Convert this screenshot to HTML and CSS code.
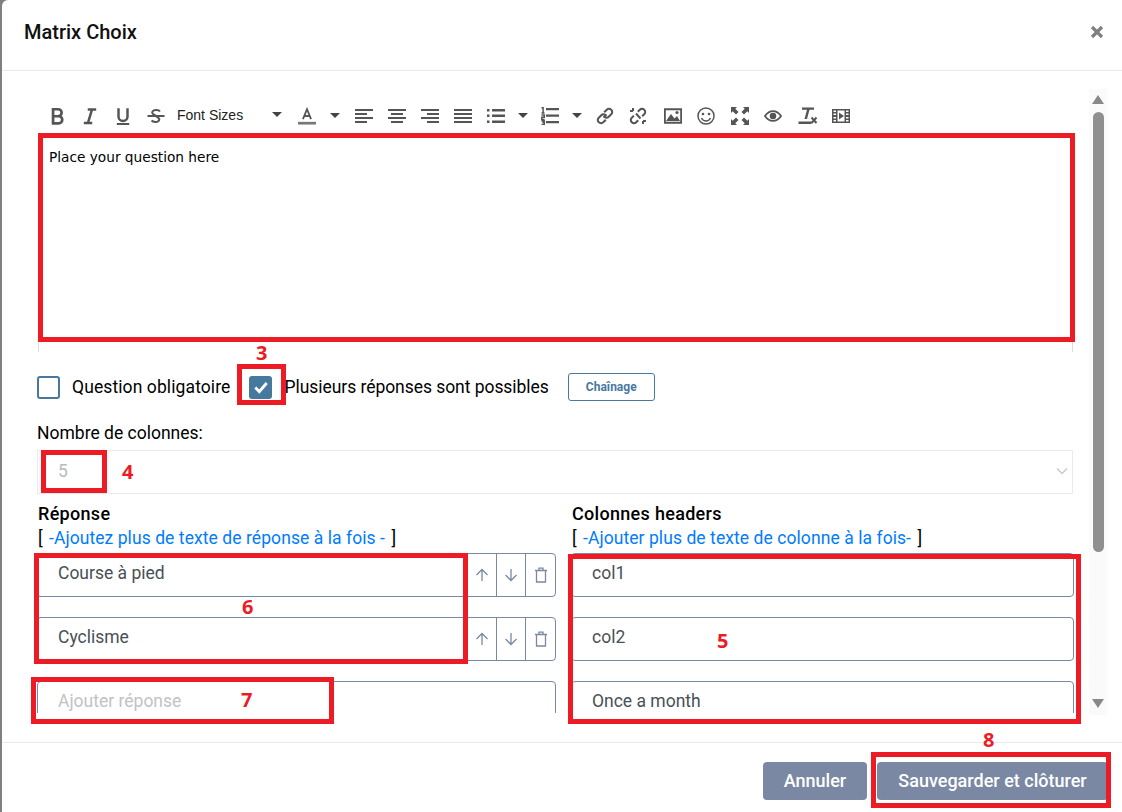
FILE: index.html
```html
<!DOCTYPE html>
<html lang="fr">
<head>
<meta charset="utf-8">
<title>Matrix Choix</title>
<link rel="stylesheet" href="styles.css">
</head>
<body>
<div class="modal">
  <header class="head">
    <h1 class="title">Matrix Choix</h1>
    <svg class="close" viewBox="0 0 14 14"><path d="M2 2l10 10M12 2L2 12"/></svg>
  </header>
  <div class="body">
    <div class="scroll">
      <div class="toolbar">
        <span class="tb"><svg viewBox="0 0 16 16"><path class="s bold" d="M4.500 2h4.500a3 3 0 0 1 0 6.200H4.500zM4.500 8.200h5a3 3 0 0 1 0 6.300h-5zM4.500 2v12.500"/></svg></span>
        <span class="tb"><svg viewBox="0 0 16 16"><path class="s semi" d="M6 2.200h7.500M2.500 14.200h7.500M9.800 2.200L6.200 14.200"/></svg></span>
        <span class="tb"><svg viewBox="0 0 16 16"><path class="s semi" d="M4 1v7.500a4 4 0 0 0 8 0V1"/><path class="s" d="M2.500 15.200h11"/></svg></span>
        <span class="tb"><svg viewBox="0 0 18 16"><path class="s" d="M13 3.500c-1-1.500-6-2.500-7.500 0S8 7 9 8s4.500 2 3 4.500-6 1.500-7.500 0M0.500 8h17" /></svg></span>
        <span class="fsize">Font Sizes<i class="caret"></i></span>
        <span class="tb w32"><svg viewBox="0 0 20 20"><path class="s" d="M5.500 13.500L10 2.500l4.500 11M7 10h6"/><path class="bar" d="M0 16.500h20v3H0z"/></svg></span>
        <span class="tb w24"><i class="caret"></i></span>
        <span class="tb"><svg viewBox="0 0 18 16"><path class="f" d="M0 1h18v2H0zM0 5h12v2H0zM0 9h18v2H0zM0 13h12v2H0z"/></svg></span>
        <span class="tb"><svg viewBox="0 0 18 16"><path class="f" d="M0 1h18v2H0zM3 5h12v2H3zM0 9h18v2H0zM3 13h12v2H3z"/></svg></span>
        <span class="tb"><svg viewBox="0 0 18 16"><path class="f" d="M0 1h18v2H0zM6 5h12v2H6zM0 9h18v2H0zM6 13h12v2H6z"/></svg></span>
        <span class="tb"><svg viewBox="0 0 18 16"><path class="f" d="M0 1h18v2H0zM0 5h18v2H0zM0 9h18v2H0zM0 13h18v2H0z"/></svg></span>
        <span class="tb w34"><svg viewBox="0 0 18 16"><path class="f" d="M0 1h2.500v2.500H0zM0 6.500h2.500V9H0zM0 12.500h2.500V15H0zM5 1h13v2.500H5zM5 6.500h13V9H5zM5 12.500h13V15H5z"/></svg></span>
        <span class="tb w20"><i class="caret"></i></span>
        <span class="tb w34"><svg viewBox="0 0 18 18"><path class="f" d="M5 1h13v2.200H5zM5 7.500h13v2.200H5zM5 14h13v2.200H5z"/><path class="thin" d="M0.500 0.800h1.600v5M0.500 6h3M0.500 8h2.800v2.200H0.800v2.300h2.800M0.500 14h2.800v1.600H1.500h1.800v1.900H0.500"/></svg></span>
        <span class="tb w20"><i class="caret"></i></span>
        <span class="tb gap1"><svg viewBox="0 0 18 18"><path class="s" d="M7.500 10.500l3-3M8.200 5.300l2.500-2.500a3 3 0 0 1 4.500 0a3 3 0 0 1 0 4.500l-2.500 2.500a3 3 0 0 1-4 .2M9.800 12.700l-2.500 2.500a3 3 0 0 1-4.500 0a3 3 0 0 1 0-4.500l2.500-2.500a3 3 0 0 1 4-.2"/></svg></span>
        <span class="tb"><svg viewBox="0 0 18 18"><path class="s" d="M8.800 4.700l2-2a3 3 0 0 1 4.400 0a3 3 0 0 1 0 4.500l-2 2M9.200 13.300l-2 2a3 3 0 0 1-4.400 0a3 3 0 0 1 0-4.500l2-2M4 1v3M1 4h3M14 17v-3M17 14h-3M7 6.500l4.500 5"/></svg></span>
        <span class="tb gap2"><svg viewBox="0 0 18 16"><path class="s" d="M0.800 1.200h16.400v13.600H0.800z"/><path class="f" d="M2 13l5-7 3.500 4.500L13 8l3 5z"/><circle class="f" cx="13" cy="4.500" r="1.600"/></svg></span>
        <span class="tb"><svg viewBox="0 0 18 18"><circle class="thin" cx="9" cy="9" r="8"/><circle class="f" cx="6" cy="7" r="1.300"/><circle class="f" cx="12" cy="7" r="1.300"/><path class="thin" d="M4.500 11c1 2 2.600 3 4.500 3s3.500-1 4.500-3"/></svg></span>
        <span class="tb gap1"><svg viewBox="0 0 18 18"><path class="f" d="M0 0h6L4.300 1.700 7.500 5 5 7.500 1.700 4.300 0 6zM18 0v6l-1.700-1.700L13 7.500 10.500 5l3.200-3.300L12 0zM0 18v-6l1.700 1.700L5 10.500 7.500 13l-3.200 3.300L6 18zM18 18h-6l1.700-1.700L10.500 13l2.500-2.500 3.300 3.200L18 12z"/></svg></span>
        <span class="tb"><svg viewBox="0 0 20 14"><path class="s" d="M1 7c2.500-3.500 5.500-5.500 9-5.500S16.500 3.500 19 7c-2.500 3.500-5.500 5.500-9 5.500S3.500 10.500 1 7z"/><circle class="f" cx="10" cy="7" r="3.600"/></svg></span>
        <span class="tb gap2"><svg class="wide" viewBox="0 0 20 18"><path class="f" d="M4 0.500h12v2.200h-4.500L9 12H6.500L9 2.700H4zM0.500 14.500h13v2.400H0.500z"/><path class="s" d="M13.500 10.500l5 5.500M18.500 10.500l-5 5.500"/></svg></span>
        <span class="tb"><svg viewBox="0 0 18 16"><path class="f" d="M0 1h18v14H0zM1.500 2.500V4H4V2.500zM14 2.500V4h2.500V2.500zM1.500 5.500V7H4V5.500zM14 5.500V7h2.500V5.500zM1.500 9v1.500H4V9zM14 9v1.500h2.500V9zM1.500 12v1.500H4V12zM14 12v1.500h2.500V12zM5.500 2.500v11h7v-11z" fill-rule="evenodd"/><path class="f" d="M7 4.500v7L12 8z"/></svg></span>
      </div>
      <div class="editor">
        <p class="placeholder">Place your question here</p>
      </div>
      <div class="checks">
        <label class="check first"><span class="box"></span><span class="lbl">Question obligatoire</span></label>
        <label class="check second"><span class="box on"><svg viewBox="0 0 14 14"><path d="M2 7.500l3.500 3.500L12 3.500"/></svg></span><span class="lbl">Plusieurs réponses sont possibles</span></label>
        <button class="chain">Chaînage</button>
      </div>
      <div class="label-nb">Nombre de colonnes:</div>
      <div class="select">
        <span>5</span>
        <svg viewBox="0 0 12 8"><path d="M1 1.500l5 5 5-5"/></svg>
      </div>
      <div class="columns">
        <section class="col">
          <div class="col-title">Réponse</div>
          <div class="col-link">[ <a>-Ajoutez plus de texte de réponse à la fois - </a>]</div>
          <div class="row">
            <div class="field">Course à pied</div>
            <span class="act"><svg viewBox="0 0 14 14"><path d="M7 13V1.500M1.500 7L7 1.500 12.500 7"/></svg></span>
            <span class="act"><svg viewBox="0 0 14 14"><path d="M7 1v11.500M1.500 7L7 12.500 12.500 7"/></svg></span>
            <span class="act"><svg viewBox="0 0 14 16"><path d="M1 3.500h12M5 3.500V1.200h4v2.300M2.500 3.500V15h9V3.500"/></svg></span>
          </div>
          <div class="row">
            <div class="field">Cyclisme</div>
            <span class="act"><svg viewBox="0 0 14 14"><path d="M7 13V1.500M1.500 7L7 1.500 12.500 7"/></svg></span>
            <span class="act"><svg viewBox="0 0 14 14"><path d="M7 1v11.500M1.500 7L7 12.500 12.500 7"/></svg></span>
            <span class="act"><svg viewBox="0 0 14 16"><path d="M1 3.500h12M5 3.500V1.200h4v2.300M2.500 3.500V15h9V3.500"/></svg></span>
          </div>
          <div class="row"><div class="field solo ph">Ajouter réponse</div></div>
        </section>
        <section class="col">
          <div class="col-title">Colonnes headers</div>
          <div class="col-link">[ <a>-Ajouter plus de texte de colonne à la fois- </a>]</div>
          <div class="row"><div class="field solo">col1</div></div>
          <div class="row"><div class="field solo">col2</div></div>
          <div class="row"><div class="field solo">Once a month</div></div>
        </section>
      </div>
    </div>
    <div class="sbar">
      <i class="arrow up"></i>
      <div class="thumb"></div>
      <i class="arrow down"></i>
    </div>
  </div>
  <footer class="foot">
    <button class="btn cancel">Annuler</button>
    <button class="btn save">Sauvegarder et clôturer</button>
  </footer>

  <div class="mark m1"></div>
  <div class="mark m3"></div>
  <div class="mark m4"></div>
  <div class="mark m5"></div>
  <div class="mark m6"></div>
  <div class="mark m7"></div>
  <div class="mark m8"></div>
  <span class="num n3">3</span>
  <span class="num n4">4</span>
  <span class="num n5">5</span>
  <span class="num n6">6</span>
  <span class="num n7">7</span>
  <span class="num n8">8</span>
</div>
</body>
</html>
```
FILE: styles.css
```css
* { box-sizing: border-box; }
html, body { margin: 0; height: 100%; }
body {
  background: #7f7f7f;
  font-family: Roboto, "Noto Sans", sans-serif;
  color: #000;
  overflow: hidden;
}
.modal {
  position: relative;
  width: 1120px;
  height: 812px;
  margin-left: 2px;
  background: #fff;
  border-top-left-radius: 6px;
  display: flex;
  flex-direction: column;
}
.head {
  height: 71px;
  flex: none;
  border-bottom: 1px solid #e9e9ef;
  display: flex;
  align-items: center;
  justify-content: space-between;
  padding: 0 18px 6px 22px;
}
.title { margin: 0; font-size: 20px; font-weight: 500; color: #111; }
.close { width: 14px; height: 14px; fill: none; stroke: #808080; stroke-width: 3.200; }
.body {
  height: 671px;
  flex: none;
  display: flex;
  padding: 21px 0 0 35px;
}
.scroll { width: 1037px; height: 621px; overflow: hidden; flex: none; }
.toolbar { height: 42px; display: flex; align-items: center; padding: 5px 0 0 3px; color: #555; }
.toolbar svg { width: 18px; height: 18px; display: block; }
.toolbar svg.wide { width: 20px; }
.tb { width: 33px; height: 20px; display: flex; align-items: center; justify-content: center; flex: none; }
.w32 { width: 32px; }
.w24 { width: 24px; }
.w34 { width: 34px; }
.w20 { width: 20px; }
.gap1 { margin-left: 1px; }
.gap2 { margin-left: 2px; }
.s { fill: none; stroke: #555; stroke-width: 2; }
.s.bold { stroke-width: 2.400; }
.s.semi { stroke-width: 2.200; }
.thin { fill: none; stroke: #555; stroke-width: 1.500; }
.f { fill: #555; }
.bar { fill: #777; }
.caret { display: block; width: 0; height: 0; border-left: 5px solid transparent; border-right: 5px solid transparent; border-top: 5px solid #444; }
.fsize { width: 119px; flex: none; padding: 0 9px 2px 5px; display: flex; align-items: center; justify-content: space-between; font: 14px "Liberation Sans", Arial, sans-serif; color: #222; }
.editor { height: 218px; border-left: 1px solid #ddd; border-right: 1px solid #ddd; padding: 15px 10px; margin: 0 1px; }
.placeholder { margin: 0; font: 13.700px "DejaVu Sans", Verdana, sans-serif; color: #000; }
.checks { height: 36px; margin-top: 17px; display: flex; align-items: center; }
.check { display: flex; align-items: center; }
.box { width: 23px; height: 23px; border: 2px solid #47799f; border-radius: 3px; flex: none; display: flex; align-items: center; justify-content: center; }
.box.on { background: #47799f; }
.box svg { width: 16px; height: 16px; fill: none; stroke: #fff; stroke-width: 2.500; }
.lbl { font-size: 17.500px; margin-left: 12px; }
.first .lbl { letter-spacing: 0.1px; }
.second { margin-left: 19px; }
.second .lbl { margin-left: 12px; letter-spacing: -0.05px; }
.chain { margin-left: 19px; width: 87px; height: 28px; border: 1px solid #47799f; border-radius: 3px; background: #fff; color: #47799f; font: 700 12px Roboto, sans-serif; padding: 0; }
.label-nb { font-size: 17.500px; margin-top: 19px; height: 19px; line-height: 19px; }
.select { height: 44px; margin: 7px 0 0 0; width: 1036px; border: 1px solid #e9e9ef; display: flex; align-items: center; justify-content: space-between; padding: 0 4px 2px 20px; font-size: 17.500px; color: #bbb; }
.select svg { width: 12px; height: 8px; fill: none; stroke: #c9c9c9; stroke-width: 1.500; }
.columns { display: grid; grid-template-columns: 519px 503px; column-gap: 15px; margin-top: 10px; }
.col-title { font-size: 18px; font-weight: 500; line-height: 19px; height: 19px; letter-spacing: 0.3px; padding-left: 1px; }
.col-link { font-size: 17.500px; line-height: 20px; height: 25px; margin-top: 5px; padding-left: 1px; }
.col-link a { color: #007bff; margin: 0 2px; letter-spacing: 0.07px; }
.row { display: flex; height: 44px; margin-bottom: 20px; }
.field { flex: 1; border: 1px solid #7a88a3; border-right: 0; border-radius: 4px 0 0 4px; padding: 7px 20px 0; font-size: 17.500px; line-height: 24px; color: #495057; }
.field.solo { border-right: 1px solid #7a88a3; border-radius: 4px; }
.field.ph { color: #c2c2c2; }
.act { width: 30px; flex: none; border: 1px solid #7a88a3; display: flex; align-items: center; justify-content: center; margin-left: -1px; }
.act:last-child { width: 31px; border-radius: 0 4px 4px 0; }
.act svg { width: 14px; height: 16px; fill: none; stroke: #7a88a3; stroke-width: 1.300; }
.sbar { width: 18px; margin: -3px 0 0 15px; height: 626px; background: #fafafa; display: flex; flex-direction: column; align-items: center; padding-top: 6px; }
.arrow { display: block; width: 0; height: 0; border-left: 6.500px solid transparent; border-right: 6.500px solid transparent; }
.arrow.up { border-bottom: 9px solid #888; }
.arrow.down { border-top: 9px solid #888; margin-top: 147px; }
.thumb { width: 11px; height: 440px; margin-top: 8px; background: #8f8f8f; border-radius: 6px; flex: none; }
.foot { height: 70px; flex: none; border-top: 1px solid #e9e9ef; display: flex; justify-content: flex-end; align-items: flex-start; padding: 19px 14px 0 0; gap: 10px; }
.btn { height: 38px; border: 0; border-radius: 4px; background: #7a88a3; color: #fff; font: 500 18px Roboto, sans-serif; padding: 0 0 2px; }
.cancel { width: 104px; }
.save { width: 231px; }
.mark { position: absolute; border: 5px solid #ed1c24; }
.m1 { left: 36px; top: 133px; width: 1037px; height: 209px; }
.m3 { left: 235px; top: 364px; width: 49px; height: 41px; }
.m4 { left: 39px; top: 450px; width: 66px; height: 43px; }
.m5 { left: 566px; top: 554px; width: 513px; height: 170px; }
.m6 { left: 32px; top: 553px; width: 434px; height: 111px; }
.m7 { left: 29px; top: 677px; width: 303px; height: 47px; }
.m8 { left: 869px; top: 752px; width: 240px; height: 56px; }
.num { position: absolute; font: 700 20px "Open Sans", sans-serif; color: #ed1c24; line-height: 24px; }
.n3 { left: 254px; top: 341px; }
.n4 { left: 120px; top: 460px; }
.n5 { left: 715px; top: 629px; }
.n6 { left: 240px; top: 595px; }
.n7 { left: 239px; top: 688px; }
.n8 { left: 981px; top: 728px; }
```
